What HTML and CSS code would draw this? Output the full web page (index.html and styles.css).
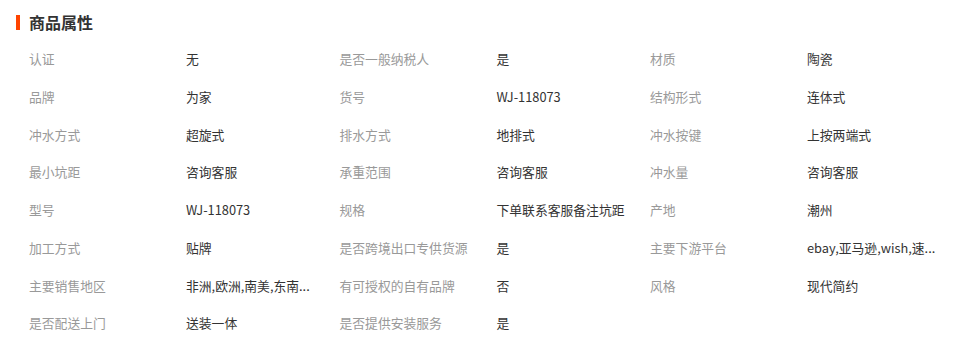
FILE: index.html
```html
<!DOCTYPE html>
<html lang="zh-CN">
<head>
<meta charset="utf-8">
<title>商品属性</title>
<link rel="stylesheet" href="styles.css">
</head>
<body>
<section class="attrs">
  <h2 class="attrs-title">商品属性</h2>
  <div class="attrs-grid">
    <div class="k">认证</div><div class="v">无</div>
    <div class="k">是否一般纳税人</div><div class="v">是</div>
    <div class="k">材质</div><div class="v">陶瓷</div>

    <div class="k">品牌</div><div class="v">为家</div>
    <div class="k">货号</div><div class="v">WJ-118073</div>
    <div class="k">结构形式</div><div class="v">连体式</div>

    <div class="k">冲水方式</div><div class="v">超旋式</div>
    <div class="k">排水方式</div><div class="v">地排式</div>
    <div class="k">冲水按键</div><div class="v">上按两端式</div>

    <div class="k">最小坑距</div><div class="v">咨询客服</div>
    <div class="k">承重范围</div><div class="v">咨询客服</div>
    <div class="k">冲水量</div><div class="v">咨询客服</div>

    <div class="k">型号</div><div class="v">WJ-118073</div>
    <div class="k">规格</div><div class="v">下单联系客服备注坑距</div>
    <div class="k">产地</div><div class="v">潮州</div>

    <div class="k">加工方式</div><div class="v">贴牌</div>
    <div class="k">是否跨境出口专供货源</div><div class="v">是</div>
    <div class="k">主要下游平台</div><div class="v">ebay,亚马逊,wish,速...</div>

    <div class="k">主要销售地区</div><div class="v">非洲,欧洲,南美,东南...</div>
    <div class="k">有可授权的自有品牌</div><div class="v">否</div>
    <div class="k">风格</div><div class="v">现代简约</div>

    <div class="k">是否配送上门</div><div class="v">送装一体</div>
    <div class="k">是否提供安装服务</div><div class="v">是</div>
  </div>
</section>
</body>
</html>
```
FILE: styles.css
```css
html, body {
  margin: 0;
  padding: 0;
  background: #fff;
}
body {
  font-family: "Microsoft YaHei", "Noto Sans CJK SC", "Noto Sans", sans-serif;
  color: #333;
}
.attrs {
  padding: 0 16px;
}
.attrs-title {
  margin: 0;
  height: 40px;
  padding-top: 4px;
  box-sizing: border-box;
  display: flex;
  align-items: center;
  font-size: 16px;
  font-weight: bold;
  color: #333;
}
.attrs-title::before {
  content: "";
  width: 4px;
  height: 15px;
  background: #ff4400;
  margin-right: 9px;
}
.attrs-grid {
  display: grid;
  grid-template-columns: 157px 153.5px 157px 153.5px 157px 153.5px;
  grid-auto-rows: 37.75px;
  padding-left: 13px;
  font-size: 12.8px;
  line-height: 37.75px;
}
.k {
  color: #999;
  white-space: nowrap;
}
.v {
  color: #333;
  white-space: nowrap;
}
```
